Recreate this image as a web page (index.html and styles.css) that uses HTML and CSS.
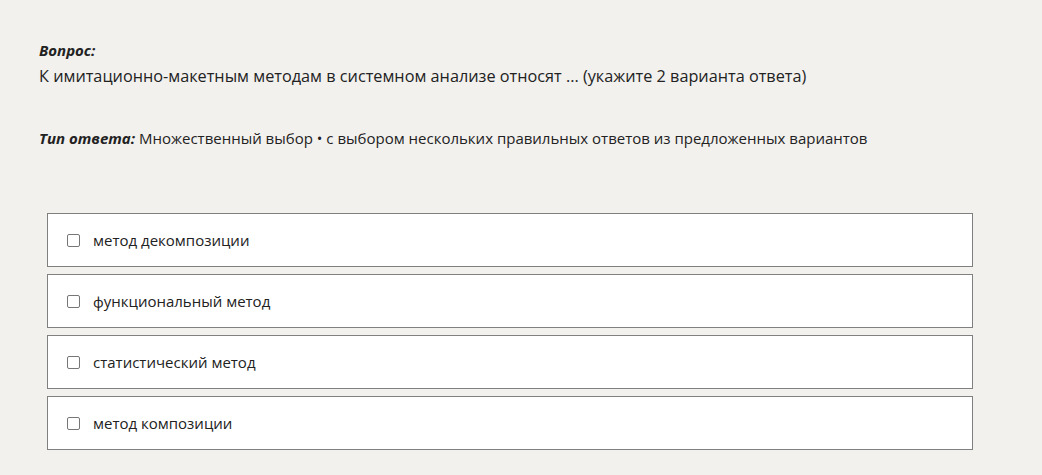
FILE: index.html
```html
<!DOCTYPE html>
<html lang="ru">
<head>
<meta charset="utf-8">
<link rel="stylesheet" href="styles.css">
</head>
<body>
<div class="page">
  <div class="label">Вопрос:</div>
  <div class="question">К имитационно-макетным методам в системном анализе относят ... (укажите 2 варианта ответа)</div>
  <div class="type"><span class="label">Тип ответа:</span> Множественный выбор • с выбором нескольких правильных ответов из предложенных вариантов</div>
  <div class="options">
    <label class="option"><span class="box"></span><span>метод декомпозиции</span></label>
    <label class="option"><span class="box"></span><span>функциональный метод</span></label>
    <label class="option"><span class="box"></span><span>статистический метод</span></label>
    <label class="option"><span class="box"></span><span>метод композиции</span></label>
  </div>
</div>
</body>
</html>
```

FILE: styles.css
```css
html, body {
  margin: 0;
  padding: 0;
  background: #f2f1ee;
}
body {
  font-family: "Open Sans", "Noto Sans", sans-serif;
  color: #222;
}
.page {
  padding: 40px 0 0 39px;
}
.label {
  font-weight: 700;
  font-style: italic;
  font-size: 15px;
  line-height: 20px;
}
.question {
  font-size: 16.25px;
  line-height: 24px;
  margin-top: 4px;
}
.type {
  font-size: 15px;
  line-height: 20px;
  margin-top: 40px;
}
.options {
  margin: 65px 0 0 8px;
  width: 926px;
  display: flex;
  flex-direction: column;
  gap: 7px;
}
.option {
  display: flex;
  align-items: center;
  height: 52px;
  background: #fff;
  border: 1px solid #808080;
  padding-left: 19px;
  font-size: 15px;
  color: #222;
}
.box {
  width: 11px;
  height: 11px;
  border: 1px solid #767676;
  border-radius: 2px;
  margin-right: 13px;
  background: #fff;
}
```
